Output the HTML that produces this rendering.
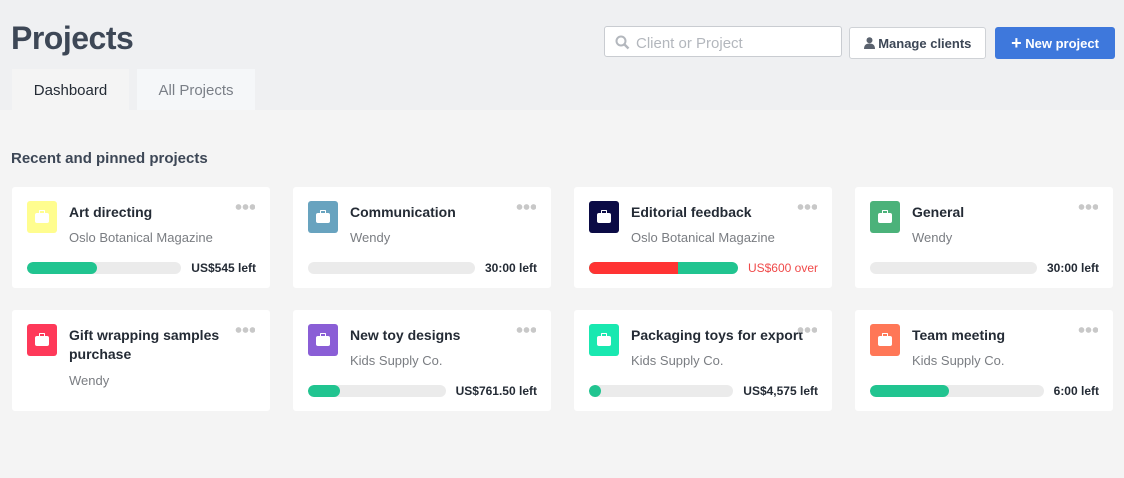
<!DOCTYPE html><html><head><style>
body{margin:0;width:1124px;height:478px;background:#f4f4f4;font-family:"Liberation Sans",sans-serif;position:relative;overflow:hidden}
.hdr{position:absolute;left:0;top:0;width:1124px;height:110px;background:#eff0f2}
h1{position:absolute;left:11px;top:20px;margin:0;font-size:32px;color:#3d4756;font-weight:bold;letter-spacing:-0.5px}
.tab{position:absolute;top:69px;height:41px;font-size:15px;line-height:44px;text-align:center}
.search{position:absolute;left:604px;top:26px;width:238px;height:31px;border:1px solid #c9ccd1;border-radius:3px;background:#fff;box-sizing:border-box;font-size:15px;color:#b3b7bd;line-height:33px;padding-left:31px}
.btn{position:absolute;top:27px;height:32px;border-radius:3px;font-size:13px;font-weight:bold;line-height:32px;box-sizing:border-box;text-align:center}
h2{position:absolute;left:11px;top:150px;margin:0;font-size:15px;color:#3d4756;font-weight:bold}
.card{position:absolute;width:258px;height:101px;background:#fff;border-radius:3px}
.ic{position:absolute;left:15px;top:14px;width:30px;height:32px;border-radius:3px}
.ic i{position:absolute;left:8px;top:12px;width:14px;height:10px;background:#fff;border-radius:2px}
.ic i:before{content:"";position:absolute;left:4px;top:-3px;width:4px;height:2px;border:1px solid #fff;border-bottom:none;border-radius:1px 1px 0 0}
.t{position:absolute;left:57px;top:16px;font-size:14px;font-weight:bold;color:#242b35;line-height:19px;width:185px}
.s{position:absolute;left:57px;font-size:13px;color:#7a7d82}
.dots{position:absolute;right:15px;top:17px;width:20px;height:6px;background:radial-gradient(circle,#c8c8c8 2.6px,transparent 3px) 0 0/7px 6px repeat-x}
.row{position:absolute;left:15px;right:14px;top:74px;display:flex;align-items:center;font-size:12px;font-weight:bold;color:#242b35}
.bar{height:12px;background:#ebebeb;border-radius:6px;flex:1;margin-right:10px;overflow:hidden;display:flex}
.f{background:#21c490;height:12px;border-radius:6px}
</style></head><body>
<div class="hdr"></div>
<h1>Projects</h1>
<div class="tab" style="left:12px;width:117px;background:#f4f4f4;color:#242b35">Dashboard</div>
<div class="tab" style="left:137px;width:118px;background:#f5f7f9;color:#7a7f87">All Projects</div>
<div class="search"><svg style="position:absolute;left:10px;top:8px" width="15" height="15" viewBox="0 0 15 15"><circle cx="6" cy="6" r="4.5" fill="none" stroke="#b3b7bd" stroke-width="2"/><path d="M9.5 9.5L13.5 13.5" stroke="#b3b7bd" stroke-width="2.4"/></svg>Client or Project</div>
<div class="btn" style="left:849px;width:137px;background:#fff;border:1px solid #cfd2d6;color:#3d4756"><svg width="11" height="12" viewBox="0 0 11 12" style="vertical-align:-1px"><circle cx="5.5" cy="3.2" r="3" fill="#5a626e"/><path d="M0 12Q0 6.5 5.5 6.5T11 12Z" fill="#5a626e"/></svg> Manage clients</div>
<div class="btn" style="left:995px;width:120px;background:#3e78dc;color:#fff"><span style="font-size:18px;vertical-align:-1px">+</span> New project</div>
<h2>Recent and pinned projects</h2>

<div class="card" style="left:12px;top:187px"><div class="ic" style="background:#fffd8f"><i></i></div><div class="t">Art directing</div><div class="dots"></div><div class="s" style="top:43px">Oslo Botanical Magazine</div><div class="row"><div class="bar"><div class="f" style="width:70px"></div></div>US$545 left</div></div>
<div class="card" style="left:293px;top:187px"><div class="ic" style="background:#68a3bf"><i></i></div><div class="t">Communication</div><div class="dots"></div><div class="s" style="top:43px">Wendy</div><div class="row"><div class="bar"></div>30:00 left</div></div>
<div class="card" style="left:574px;top:187px"><div class="ic" style="background:#0b0b45"><i></i></div><div class="t">Editorial feedback</div><div class="dots"></div><div class="s" style="top:43px">Oslo Botanical Magazine</div><div class="row" style="color:#f04a4a;font-weight:normal"><div class="bar" style="background:#21c490"><div style="width:89px;background:#ff3333;height:12px;border-radius:6px 0 0 6px"></div></div>US$600 over</div></div>
<div class="card" style="left:855px;top:187px"><div class="ic" style="background:#4bb27a"><i></i></div><div class="t">General</div><div class="dots"></div><div class="s" style="top:43px">Wendy</div><div class="row"><div class="bar"></div>30:00 left</div></div>

<div class="card" style="left:12px;top:310px"><div class="ic" style="background:#fe3959"><i></i></div><div class="t">Gift wrapping samples purchase</div><div class="dots"></div><div class="s" style="top:63px">Wendy</div></div>
<div class="card" style="left:293px;top:310px"><div class="ic" style="background:#8a5ed6"><i></i></div><div class="t">New toy designs</div><div class="dots"></div><div class="s" style="top:43px">Kids Supply Co.</div><div class="row"><div class="bar"><div class="f" style="width:32px"></div></div>US$761.50 left</div></div>
<div class="card" style="left:574px;top:310px"><div class="ic" style="background:#19e8b0"><i></i></div><div class="t">Packaging toys for export</div><div class="dots"></div><div class="s" style="top:43px">Kids Supply Co.</div><div class="row"><div class="bar"><div class="f" style="width:12px"></div></div>US$4,575 left</div></div>
<div class="card" style="left:855px;top:310px"><div class="ic" style="background:#ff7757"><i></i></div><div class="t">Team meeting</div><div class="dots"></div><div class="s" style="top:43px">Kids Supply Co.</div><div class="row"><div class="bar"><div class="f" style="width:79px"></div></div>6:00 left</div></div>
</body></html>
